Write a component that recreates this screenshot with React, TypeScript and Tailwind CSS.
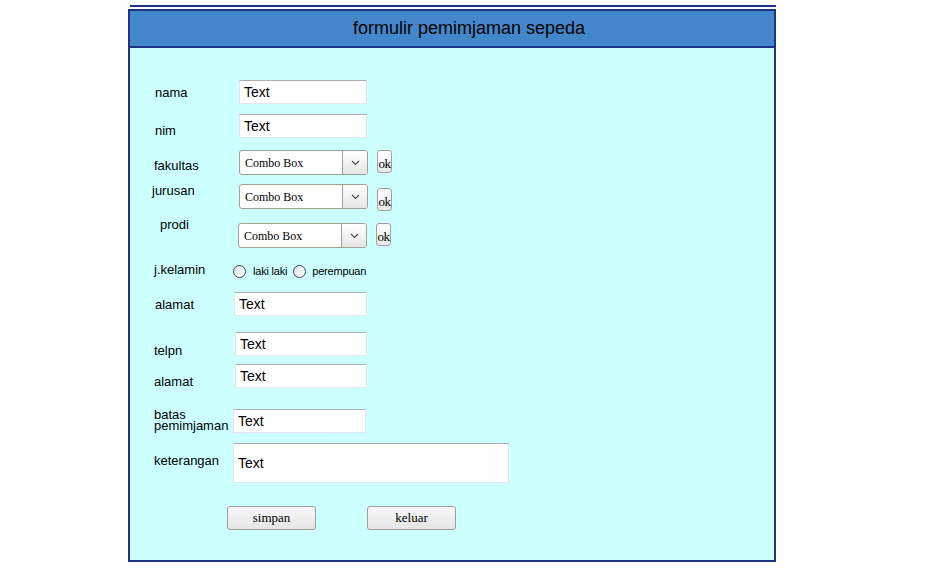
const sans = { fontFamily: '"Liberation Sans", Arial, sans-serif' }
const serif = { fontFamily: '"Liberation Serif", "Times New Roman", serif' }

const TextBox = ({ w = 'w-[128px]', h = 'h-[24px]', className = '' }: { w?: string; h?: string; className?: string }) => (
  <div
    className={`${w} ${h} ${className} flex items-center bg-white border border-[#e3e6ec] border-t-[#abadb3] pl-[4px] text-[14px] text-black`}
  >
    Text
  </div>
)

const TextArea = () => (
  <div className="w-[276px] h-[40px] flex items-center bg-white border border-[#e3e6ec] border-t-[#abadb3] pl-[4px] text-[14px] text-black">
    Text
  </div>
)

const Combo = ({ className = '' }: { className?: string }) => (
  <div
    className={`${className} w-[129px] h-[25px] flex bg-white border border-[#a59e92] rounded-[3px] overflow-hidden`}
  >
    <div className="flex-1 flex items-center pl-[5px] text-[12px] text-black" style={serif}>
      Combo Box
    </div>
    <div className="w-[25px] flex items-center justify-center border-l border-[#a59e92] bg-gradient-to-b from-[#ffffff] to-[#e6e6e6]">
      <svg width="9" height="6" viewBox="0 0 9 6">
        <polyline points="1,1 4.5,4.5 8,1" fill="none" stroke="#4a4a4a" strokeWidth="1.1" />
      </svg>
    </div>
  </div>
)

const OkBtn = ({ className = '' }: { className?: string }) => (
  <div
    className={`${className} w-[15px] h-[23px] flex items-end justify-center pb-[2px] border border-[#a59e92] rounded-[3px] bg-gradient-to-b from-[#ffffff] to-[#e9e9e9] text-[13px] leading-none tracking-[-0.5px] text-black`}
    style={serif}
  >
    ok
  </div>
)

const Radio = () => (
  <span className="w-[13px] h-[13px] rounded-full border border-[#3d4b5e] bg-gradient-to-br from-[#dde3ea] to-[#ffffff]" />
)

const Btn = ({ label }: { label: string }) => (
  <div
    className="w-[89px] h-[24px] flex items-center justify-center border border-[#a39c90] rounded-[3px] bg-gradient-to-b from-[#f8f8f8] to-[#e5e5e5] text-[13px] text-black"
    style={serif}
  >
    {label}
  </div>
)

const Label = ({
  children,
  w,
  pl,
  mt,
  leading = 'leading-[15px]',
}: {
  children: React.ReactNode
  w: string
  pl: string
  mt: string
  leading?: string
}) => <div className={`${w} ${pl} ${mt} ${leading} shrink-0 text-[13px] text-black`}>{children}</div>

export default function App() {
  return (
    <div className="w-[945px] h-[571px] bg-white" style={sans}>
      <div className="ml-[128px] pt-[5px] w-[648px]">
        <div className="border-t-2 border-[#1e3383] ml-[2px]" />
        <div className="mt-[2px] border-2 border-[#1e3383] bg-[#ccffff]">
          <div className="h-[37px] flex items-center justify-center pl-[34px] bg-[#4387ca] border-b-2 border-[#1e3383] text-[18px] text-black">
            formulir pemimjaman sepeda
          </div>

          <div className="flex flex-col pb-[30px]">
            {/* nama */}
            <div className="mt-[32px] flex items-start h-[24px]">
              <Label w="w-[109px]" pl="pl-[25px]" mt="mt-[5px]">nama</Label>
              <TextBox />
            </div>

            {/* nim */}
            <div className="mt-[10px] flex items-start h-[24px]">
              <Label w="w-[109px]" pl="pl-[25px]" mt="mt-[9px]">nim</Label>
              <TextBox />
            </div>

            {/* fakultas */}
            <div className="mt-[12px] flex items-start h-[25px]">
              <Label w="w-[109px]" pl="pl-[24px]" mt="mt-[8px]">fakultas</Label>
              <Combo />
              <OkBtn className="ml-[9px]" />
            </div>

            {/* jurusan */}
            <div className="mt-[7px] flex items-start h-[30px]">
              <Label w="w-[109px]" pl="pl-[22px]" mt="mt-[1px]">jurusan</Label>
              <Combo className="mt-[2px]" />
              <OkBtn className="ml-[9px] mt-[6px]" />
            </div>

            {/* prodi */}
            <div className="mt-[4px] flex items-start h-[32px]">
              <Label w="w-[108px]" pl="pl-[30px]" mt="mt-[1px]">prodi</Label>
              <Combo className="mt-[7px]" />
              <OkBtn className="ml-[9px] mt-[7px]" />
            </div>

            {/* j.kelamin */}
            <div className="mt-[14px] flex items-start h-[15px]">
              <Label w="w-[103px]" pl="pl-[24px]" mt="mt-0">j.kelamin</Label>
              <div className="mt-[1px] flex items-center text-[11px] tracking-[-0.2px] text-black">
                <Radio />
                <span className="ml-[7px]">laki laki</span>
                <span className="ml-[6px] flex"><Radio /></span>
                <span className="ml-[6px]">perempuan</span>
              </div>
            </div>

            {/* alamat */}
            <div className="mt-[15px] flex items-start h-[24px]">
              <Label w="w-[104px]" pl="pl-[25px]" mt="mt-[5px]">alamat</Label>
              <TextBox w="w-[133px]" />
            </div>

            {/* telpn */}
            <div className="mt-[16px] flex items-start h-[24px]">
              <Label w="w-[105px]" pl="pl-[24px]" mt="mt-[11px]">telpn</Label>
              <TextBox w="w-[132px]" />
            </div>

            {/* alamat */}
            <div className="mt-[8px] flex items-start h-[24px]">
              <Label w="w-[105px]" pl="pl-[24px]" mt="mt-[10px]">alamat</Label>
              <TextBox w="w-[132px]" />
            </div>

            {/* batas pemimjaman */}
            <div className="mt-[20px] flex items-start h-[25px]">
              <Label w="w-[103px]" pl="pl-[24px]" mt="mt-[1px]" leading="leading-[11px]">
                batas
                <br />
                pemimjaman
              </Label>
              <TextBox w="w-[133px]" className="mt-[1px]" />
            </div>

            {/* keterangan */}
            <div className="mt-[10px] flex items-start h-[40px]">
              <Label w="w-[103px]" pl="pl-[24px]" mt="mt-[10px]">keterangan</Label>
              <TextArea />
            </div>

            {/* buttons */}
            <div className="mt-[23px] flex items-start h-[24px] pl-[97px] gap-[51px]">
              <Btn label="simpan" />
              <Btn label="keluar" />
            </div>
          </div>
        </div>
      </div>
    </div>
  )
}
